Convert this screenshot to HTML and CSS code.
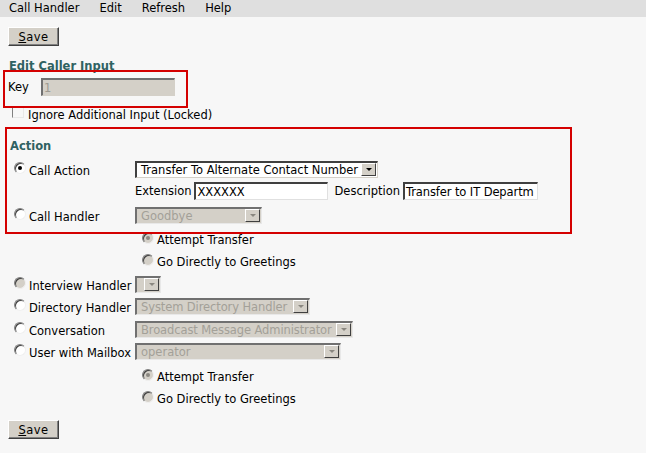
FILE: index.html
```html
<!DOCTYPE html>
<html>
<head>
<meta charset="utf-8">
<link rel="stylesheet" href="styles.css">
</head>
<body>
<div class="page">
  <div class="menubar">
    <span class="menu">Call Handler</span>
    <span class="menu">Edit</span>
    <span class="menu">Refresh</span>
    <span class="menu">Help</span>
  </div>

  <div class="content">
    <div class="btn-row"><span class="btn"><u>S</u>ave</span></div>

    <div class="heading h-edit">Edit Caller Input</div>
    <div class="key-row">
      <span class="key-label">Key</span>
      <span class="field field-key disabled">1</span>
    </div>
    <div class="check-row">
      <span class="checkbox"></span>
      <span>Ignore Additional Input (Locked)</span>
    </div>

    <div class="heading h-action">Action</div>

    <div class="row">
      <div class="lab"><span class="radio checked"></span>Call Action</div>
      <div class="ctl"><span class="select sel-action"><span class="sel-text">Transfer To Alternate Contact Number</span><span class="arrow"></span></span></div>
    </div>
    <div class="row">
      <div class="lab"></div>
      <div class="ctl">
        <span class="txt">Extension</span><span class="field field-ext">XXXXXX</span>
        <span class="txt desc">Description</span><span class="field field-desc">Transfer to IT Departm</span>
      </div>
    </div>
    <div class="row mt2">
      <div class="lab"><span class="radio"></span>Call Handler</div>
      <div class="ctl"><span class="select disabled sel-ch"><span class="sel-text">Goodbye</span><span class="arrow"></span></span></div>
    </div>
    <div class="row mt2 sub">
      <span class="radio dis checked"></span>Attempt Transfer
    </div>
    <div class="row sub">
      <span class="radio dis"></span>Go Directly to Greetings
    </div>
    <div class="row mt1">
      <div class="lab"><span class="radio dis"></span>Interview Handler</div>
      <div class="ctl"><span class="select disabled sel-ih"><span class="sel-text"></span><span class="arrow"></span></span></div>
    </div>
    <div class="row">
      <div class="lab"><span class="radio"></span>Directory Handler</div>
      <div class="ctl"><span class="select disabled sel-dh"><span class="sel-text">System Directory Handler</span><span class="arrow"></span></span></div>
    </div>
    <div class="row mt1">
      <div class="lab"><span class="radio"></span>Conversation</div>
      <div class="ctl"><span class="select disabled sel-conv"><span class="sel-text">Broadcast Message Administrator</span><span class="arrow"></span></span></div>
    </div>
    <div class="row">
      <div class="lab"><span class="radio"></span>User with Mailbox</div>
      <div class="ctl"><span class="select disabled sel-mb"><span class="sel-text">operator</span><span class="arrow"></span></span></div>
    </div>
    <div class="row mt3 sub">
      <span class="radio dis checked"></span>Attempt Transfer
    </div>
    <div class="row sub">
      <span class="radio dis"></span>Go Directly to Greetings
    </div>

    <div class="btn-row bottom"><span class="btn"><u>S</u>ave</span></div>
  </div>

  <div class="redbox box-key"></div>
  <div class="redbox box-action"></div>
</div>
</body>
</html>
```

FILE: styles.css
```css
html, body {
  margin: 0;
  padding: 0;
  background: #f7f7f7;
}
body {
  font-family: "DejaVu Sans", Verdana, sans-serif;
  font-size: 11.5px;
  color: #000;
}
.page {
  position: relative;
  width: 646px;
  height: 453px;
  overflow: hidden;
}
.menubar {
  height: 17px;
  background: #dfdfdf;
  display: flex;
  align-items: center;
  padding-left: 9px;
  gap: 20px;
  line-height: 15px;
}
.content {
  display: flex;
  flex-direction: column;
}
.btn-row {
  margin-top: 10px;
  padding-left: 8px;
  height: 19px;
}
.btn-row.bottom {
  margin-top: 11px;
}
.btn {
  display: inline-flex;
  align-items: center;
  justify-content: center;
  box-sizing: border-box;
  width: 51px;
  height: 19px;
  background: #d4d0c8;
  border: 1px solid;
  border-color: #ffffff #404040 #404040 #ffffff;
  box-shadow: inset -1px -1px #808080;
  letter-spacing: 0.5px;
}
.heading {
  font-weight: bold;
  color: #2f6262;
  line-height: 14px;
}
.h-edit {
  margin-top: 13px;
  padding-left: 9px;
}
.key-row {
  display: flex;
  align-items: center;
  height: 18px;
  margin-top: 5px;
  padding-left: 8px;
}
.key-label {
  width: 33px;
}
.field {
  display: inline-flex;
  align-items: center;
  box-sizing: border-box;
  height: 18px;
  background: #fff;
  border-style: solid;
  border-width: 2px 1px 1px 2px;
  border-color: #404040 #e0e0e0 #e0e0e0 #404040;
  padding-left: 1px;
  white-space: nowrap;
  overflow: hidden;
}
.field.disabled {
  background: #d4d0c8;
  color: #9e9a92;
  border-color: #707070 #d4d0c8 #d4d0c8 #707070;
}
.field-key { width: 134px; }
.field-ext { width: 134px; }
.field-desc { width: 135px; letter-spacing: -0.1px; }
.check-row {
  display: flex;
  align-items: center;
  height: 16px;
  margin-top: 11px;
  padding-left: 12px;
}
.checkbox {
  display: inline-block;
  box-sizing: border-box;
  width: 12px;
  height: 11px;
  border-style: solid;
  border-width: 1px;
  border-color: #808080 #e8e8e8 #e8e8e8 #808080;
  background: #f7f7f7;
  margin-right: 4px;
  margin-top: -6px;
}
.h-action {
  margin-top: 16px;
  padding-left: 10px;
}
.row {
  display: flex;
  align-items: center;
  height: 22px;
  white-space: nowrap;
}
.h-action + .row { margin-top: 5px; }
.mt1 { margin-top: 1px; }
.mt2 { margin-top: 2px; }
.mt3 { margin-top: 3px; }
.lab {
  width: 135px;
  display: flex;
  align-items: center;
  padding-left: 14px;
  padding-top: 3px;
  box-sizing: border-box;
}
.ctl {
  display: flex;
  align-items: center;
}
.sub {
  padding-left: 142px;
  padding-top: 2px;
  box-sizing: border-box;
}
.radio {
  position: relative;
  display: inline-block;
  box-sizing: border-box;
  width: 12px;
  height: 12px;
  border-radius: 50%;
  border: 1px solid;
  border-color: #808080 #f0f0f0 #f0f0f0 #808080;
  box-shadow: inset 1px 1px #404040;
  background: #fff;
  margin-right: 3px;
  margin-top: -5px;
}
.radio.dis {
  background: #d4d0c8;
}
.radio.checked::after {
  content: "";
  position: absolute;
  left: 3px;
  top: 3px;
  width: 4px;
  height: 4px;
  border-radius: 50%;
  background: #000;
}
.radio.dis.checked::after {
  background: #8a8780;
}
.select {
  display: inline-flex;
  align-items: center;
  box-sizing: border-box;
  height: 17px;
  background: #fff;
  border-style: solid;
  border-width: 2px 1px 1px 2px;
  border-color: #404040 #d4d0c8 #d4d0c8 #404040;
  white-space: nowrap;
}
.select.disabled {
  background: #d4d0c8;
  color: #a3a098;
  border-color: #707070 #e8e8e8 #e8e8e8 #707070;
}
.sel-text {
  flex: 1;
  min-width: 0;
  padding-left: 4px;
  overflow: hidden;
}
.sel-conv .sel-text,
.sel-dh .sel-text {
  letter-spacing: -0.1px;
}
.arrow {
  position: relative;
  flex: none;
  box-sizing: border-box;
  width: 15px;
  height: 13px;
  background: #d4d0c8;
  border: 1px solid;
  border-color: #ffffff #404040 #404040 #ffffff;
  margin-right: 1px;
}
.arrow::after {
  content: "";
  position: absolute;
  left: 4px;
  top: 4px;
  border-left: 3px solid transparent;
  border-right: 3px solid transparent;
  border-top: 3px solid #000;
}
.disabled .arrow::after {
  border-top-color: #8a8780;
}
.sel-action { width: 243px; }
.sel-ch { width: 127px; }
.sel-ih { width: 26px; }
.sel-dh { width: 175px; }
.sel-conv { width: 218px; }
.sel-mb { width: 206px; }
.txt {
  margin-right: 3px;
}
.desc {
  margin-left: 6px;
}
.redbox {
  position: absolute;
  box-sizing: border-box;
  border: 2px solid #d40000;
}
.box-key {
  left: 3px;
  top: 70px;
  width: 185px;
  height: 38px;
}
.box-action {
  left: 5px;
  top: 127px;
  width: 567px;
  height: 107px;
}
```
